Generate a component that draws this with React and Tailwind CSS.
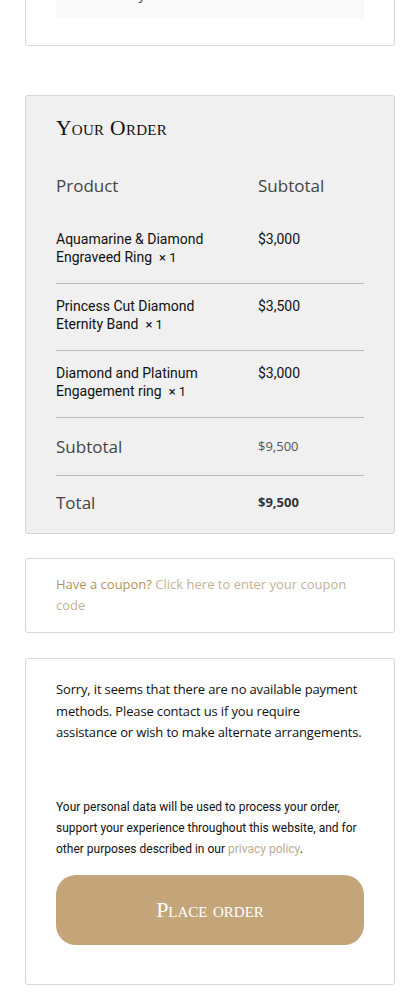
export default function App() {
  const sans = { fontFamily: '"Open Sans", "Noto Sans", sans-serif' };
  const roboto = { fontFamily: 'Roboto, "Liberation Sans", sans-serif' };
  const serif = { fontFamily: '"Liberation Serif", "DejaVu Serif", serif', fontVariant: 'small-caps' };
  const items = [
    ['Aquamarine & Diamond', 'Engraveed Ring', '$3,000'],
    ['Princess Cut Diamond', 'Eternity Band', '$3,500'],
    ['Diamond and Platinum', 'Engagement ring', '$3,000'],
  ];
  return (
    <div className="w-[420px] bg-white overflow-hidden h-[1000px]">
      <div className="ml-[25px] w-[370px] -mt-[57px] border border-[#d6d6d6] rounded-[3px] px-[30px] pt-[10px] pb-[27px]">
        <div className="bg-[#f9f9f9] rounded-[3px] px-4 pt-2 pb-[14px] text-[14px] text-[#444] leading-[21px]" style={sans}>
          <div>Your address is required</div>
          <div>for delivery.</div>
        </div>
      </div>

      <div className="ml-[25px] w-[370px] mt-[49px] border border-[#d6d6d6] rounded-[3px] bg-[#f0f0f0] px-[30px] pt-[18px] pb-[3px]">
        <h2 className="text-[21.5px] leading-[28px] text-[#111] tracking-[0.3px]" style={serif}>Your Order</h2>
        <div className="flex mt-[31px] text-[17px] leading-[25px] text-[#444]" style={sans}>
          <div className="w-[202px]">Product</div>
          <div>Subtotal</div>
        </div>
        <div className="mt-[32px]">
          {items.map((it, i) => (
            <div key={i} className={`flex text-[14px] leading-[18px] text-[#111] ${i === 0 ? 'pt-0' : 'pt-[13px]'} pb-[16px] border-b border-[#bcbcbc]`} style={roboto}>
              <div className="w-[202px]">
                {it[0]}<br />{it[1]}&nbsp; <span className="text-[13px]">× 1</span>
              </div>
              <div>{it[2]}</div>
            </div>
          ))}
          <div className="flex items-center h-[58px] border-b border-[#bcbcbc]">
            <div className="w-[202px] text-[17px] text-[#444]" style={sans}>Subtotal</div>
            <div className="text-[13px] text-[#555]" style={sans}>$9,500</div>
          </div>
          <div className="flex items-center h-[54px]">
            <div className="w-[202px] text-[17px] text-[#444]" style={sans}>Total</div>
            <div className="text-[13px] text-[#333] font-bold" style={sans}>$9,500</div>
          </div>
        </div>
      </div>

      <div className="ml-[25px] w-[370px] mt-[24px] border border-[#d6d6d6] rounded-[3px] px-[30px] pt-[15px] pb-[16px] text-[13px] leading-[21px]" style={sans}>
        <span className="text-[#b5935c]">Have a coupon?</span>{' '}
        <span className="text-[#c2b396]">Click here to enter your coupon code</span>
      </div>

      <div className="ml-[25px] w-[370px] mt-[25px] border border-[#d6d6d6] rounded-[3px] px-[30px] pt-[20px] pb-[39px]">
        <p className="text-[13px] leading-[21.5px] tracking-[-0.15px] text-[#111]" style={sans}>
          Sorry, it seems that there are no available payment methods. Please contact us if you require assistance or wish to make alternate arrangements.
        </p>
        <p className="mt-[53px] text-[12px] leading-[21px] text-[#111]" style={roboto}>
          Your personal data will be used to process your order, support your experience throughout this website, and for other purposes described in our <span className="text-[#b9ad98]">privacy policy</span>.
        </p>
        <button className="mt-[15px] w-full h-[70px] rounded-[20px] bg-[#c4a57a] text-white text-[22px]" style={serif}>
          Place order
        </button>
      </div>
    </div>
  );
}
